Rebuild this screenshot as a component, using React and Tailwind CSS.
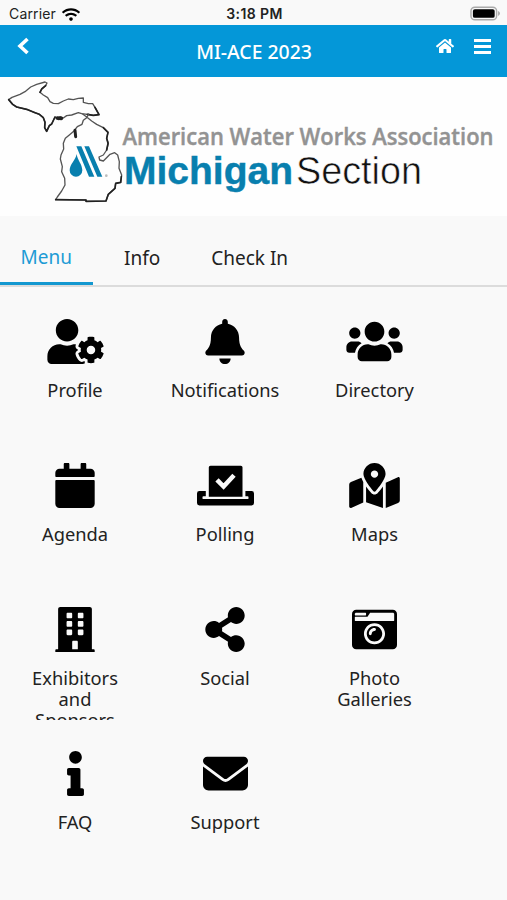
import React from 'react';
import {
  FaBell,
  FaBuilding,
  FaCalendar,
  FaCameraRetro,
  FaHome,
  FaInfo,
  FaMapMarkedAlt,
  FaShareAlt,
  FaUserCog,
  FaUsers,
  FaWifi,
} from 'react-icons/fa';
import { FaEnvelope } from 'react-icons/fa6';

const BallotIcon = () => (
  <svg width="57" height="45" viewBox="0 0 57 45" fill="currentColor">
    <path d="M13.500 2.700h30.400q1.600 0 1.600 1.600V33.700H11.800V4.300q0-1.600 1.700-1.600z" />
    <path d="M2.400 28h6.400v5.200H6.400q-.9 0-.9.9v1.100q0 .9.900.9h44.200q.9 0 .9-.9v-1.100q0-.9-.9-.9h-2.200V28h6.200q2.400 0 2.400 2.400V40q0 2.400-2.400 2.400H2.400Q0 42.400 0 40V30.400Q0 28 2.400 28z" />
    <path d="M20 16.800l6.600 6.700L37 12.300" fill="none" stroke="#f9f9f9" strokeWidth="4.600" />
  </svg>
);

const items = [
  { label: 'Profile', icon: <FaUserCog className="h-[45px] w-[57px]" /> },
  { label: 'Notifications', icon: <FaBell className="h-[45px] w-[40px]" /> },
  { label: 'Directory', icon: <FaUsers className="h-[45px] w-[57px]" /> },
  { label: 'Agenda', icon: <FaCalendar className="h-[45px] w-[40px]" /> },
  { label: 'Polling', icon: <BallotIcon /> },
  { label: 'Maps', icon: <FaMapMarkedAlt className="h-[45px] w-[51px]" /> },
  { label: 'Exhibitors and Sponsors', icon: <FaBuilding className="h-[45px] w-[40px]" /> },
  { label: 'Social', icon: <FaShareAlt className="h-[45px] w-[40px]" /> },
  { label: 'Photo Galleries', icon: <FaCameraRetro className="h-[45px] w-[45px]" /> },
  { label: 'FAQ', icon: <FaInfo className="h-[45px] w-[17px]" /> },
  { label: 'Support', icon: <FaEnvelope className="h-[45px] w-[45px]" /> },
];

const StatusBar = () => (
  <div className="grid h-[25px] grid-cols-3 items-center bg-[#f9f9f9] pr-[7px] pl-[9px] font-['Inter',sans-serif] text-[14px] leading-none text-[#222]">
    <div className="flex items-center gap-[6px] pt-[3px]">
      <span className="tracking-[0.15px]">Carrier</span>
      <FaWifi className="h-[15px] w-[18px] text-black" />
    </div>
    <span className="pt-[3px] text-center font-semibold tracking-[0.4px]">3:18 PM</span>
    <svg className="mt-[2px] justify-self-end" width="30" height="15" viewBox="0 0 31 15">
      <rect x="1" y="1" width="26.500" height="13" rx="4" fill="#f9f9f9" stroke="#aaa" strokeWidth="1.500" />
      <rect x="3" y="3" width="22.500" height="9" rx="2" fill="#000" />
      <path d="M29 5v5q2-1 2-2.500T29 5z" fill="#aaa" />
    </svg>
  </div>
);

const Header = () => (
  <header className="flex h-[52px] items-center justify-between bg-[#0497d8] px-4 text-white">
    <svg className="mb-[10px]" width="14" height="18" viewBox="0 0 14 18">
      <path d="M11.500 2L4 9l7.500 7" fill="none" stroke="currentColor" strokeWidth="3.600" />
    </svg>
    <h1 className="ml-[42px] pt-[1px] text-[19.4px] leading-none font-medium">MI-ACE 2023</h1>
    <div className="mb-[10px] flex items-center gap-[20px]">
      <FaHome className="h-[18px] w-[18px]" />
      <svg width="17" height="15" viewBox="0 0 17 15" fill="currentColor">
        <path d="M0 0h17v3H0zM0 6h17v3H0zM0 12h17v3H0z" />
      </svg>
    </div>
  </header>
);

const Logo = () => (
  <svg className="block bg-[#fefefe]" width="507" height="139" viewBox="0 0 507 139">
    <g transform="translate(0 -2) scale(.33333)" fill="none" strokeLinejoin="round" strokeLinecap="round">
      {/* Upper peninsula */}
      <path
        d="M26 74L36 67 60 58 75 50 92 36 110 28 135 21 141 24 137 32 125 42 120 52 130 60 143 68 150 80 160 85 175 86 190 78 205 72 220 74 235 70 250 69 250 82 265 86 278 86 285 97 297 119 280 121 262 118 245 116 235 113 215 120 200 122 190 129 180 125 176 134 165 126 155 147 148 152 140 169 134 158 135 142 130 128 118 118 105 113 80 103 50 96 38 88z"
        stroke="#555"
        strokeWidth="4"
      />
      <path d="M26 74L38 88 50 96 80 103 105 113 118 118 130 128 135 142 134 158 140 169 148 152 155 147 165 126M170 130l14 0M262 118L280 121 297 119 285 97M120 52L125 42 137 32" stroke="#222" strokeWidth="5" />
      <path d="M172 129l12 1" stroke="#222" strokeWidth="11" />
      {/* Lower peninsula */}
      <path
        d="M266 117L260 128 250 136 246 148 232 155 222 168 208 180 196 190 190 205 191 222 183 240 181 252 187 275 185 290 194 310 195 330 185 348 172 366 167 374 258 375 258 379 318 378 325 358 345 340 347 325 362 322 365 300 357 280 358 260 353 240 344 233 330 238 322 246 310 258 299 255 297 246 310 240 320 225 325 205 320 190 324 172 310 158 290 148 275 138 260 126 248 117"
        stroke="#555"
        strokeWidth="4"
      />
      <path d="M225 166l2 19" stroke="#222" strokeWidth="9" />
      <path d="M167 374L258 375 258 379 318 378 325 358 345 340 347 325 362 322 364 305M310 158L324 172 320 190 324 205 320 225" stroke="#222" strokeWidth="5" />
      <g fill="#087fae">
        <path d="M230 237c-3 18-21 31-21 49a19 19 0 0 0 38 0c0-18-15-31-17-49z" />
        <path d="M229 214h15l39 91h-16zM253 214h14l40 91h-15z" />
      </g>
      <circle cx="319" cy="302" r="4" fill="#bbb" />
    </g>
    <text x="122.500" y="68" textLength="371" lengthAdjust="spacingAndGlyphs" className="fill-[#939393] stroke-[#939393] font-['Open_Sans',sans-serif] text-[22.5px] font-semibold [stroke-width:0.4px]">
      American Water Works Association
    </text>
    <text x="124" y="107" textLength="169" lengthAdjust="spacingAndGlyphs" className="fill-[#087fae] stroke-[#087fae] font-['Liberation_Sans',sans-serif] text-[38px] font-bold [stroke-width:0.4px]">
      Michigan
    </text>
    {/* background coloured outline thins the regular weight */}
    <text x="296" y="107" textLength="126" lengthAdjust="spacingAndGlyphs" className="fill-[#111] stroke-[#fefefe] font-['Liberation_Sans',sans-serif] text-[39px] [stroke-width:0.6px]">
      Section
    </text>
  </svg>
);

const Tabs = () => (
  <nav className="flex h-[71px] items-end border-b-2 border-[#dcdcdc] text-[19px] leading-none">
    <span className="w-[93px] border-b-[3px] border-[#1398d0] pb-[15px] pl-[20.5px] text-[#1d9bd5]">Menu</span>
    <span className="ml-[31px] pb-[17px] text-[#222]">Info</span>
    <span className="ml-[51px] pb-[17px] text-[#222]">Check In</span>
  </nav>
);

const App = () => {
  return (
    <div className="h-[900px] w-[507px] overflow-hidden bg-[#f9f9f9] font-['Noto_Sans',sans-serif]">
      <StatusBar />
      <Header />
      <Logo />
      <Tabs />
      <main className="grid grid-cols-[150px_150px_149px] pt-[32px]">
        {items.map(({ label, icon }) => (
          <div key={label} className="flex h-[144px] flex-col items-center text-black">
            {icon}
            <div className="mt-[15px] h-[53px] w-[110px] overflow-hidden text-center text-[18.3px] leading-[21px] text-[#222]">
              {label}
            </div>
          </div>
        ))}
      </main>
    </div>
  );
};

export default App;
